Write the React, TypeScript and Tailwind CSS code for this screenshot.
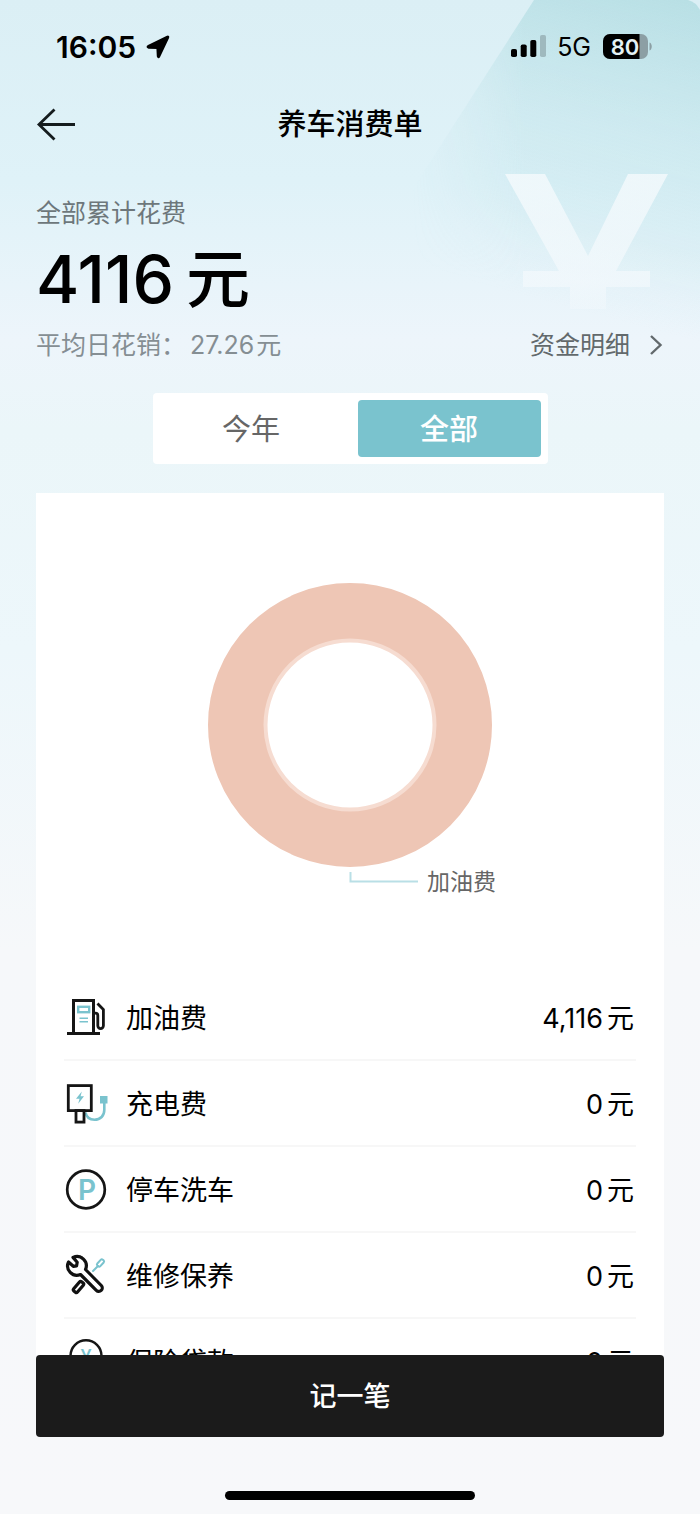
import { useState } from 'react'
import type { ReactNode } from 'react'

type Expense = {
  name: string
  amount: string
  icon: ReactNode
}

function FuelIcon() {
  return (
    <svg viewBox="0 0 44 44" className="size-11" fill="none" stroke="#151515" strokeWidth="3" aria-hidden="true">
      <path d="M3 38.5H36" />
      <rect x="9.5" y="5.5" width="20" height="33" />
      <path d="M30 18.2h1.5a2.3 2.3 0 0 1 2.3 2.3v10.3a2.8 2.8 0 0 0 5.6 0V14.5L33.5 8.5" strokeWidth="2.8" />
      <rect x="14.2" y="11.8" width="11" height="5.4" stroke="#7ac3ce" strokeWidth="2.4" />
      <path d="M15.5 23.2h8.5M15.5 26.8h8.5" stroke="#7ac3ce" strokeWidth="1.6" />
    </svg>
  )
}

function ChargeIcon() {
  return (
    <svg viewBox="0 0 44 44" className="size-11" fill="none" stroke="#151515" strokeWidth="2.8" aria-hidden="true">
      <path d="M21.5 31.5c1 5 4.8 7.2 9 7.2c6 0 9.8-4 9.8-9.7v-8" stroke="#7ac3ce" strokeWidth="2.6" />
      <rect x="36" y="15" width="7.5" height="7.5" fill="#7ac3ce" stroke="none" />
      <rect x="4.3" y="4.6" width="23" height="25" />
      <rect x="12" y="29.6" width="8" height="11.5" />
      <path d="M17.8 10.5L12 17.8H15.5L14.2 22.7L20 15.3H16.6Z" fill="#7ac3ce" stroke="none" />
    </svg>
  )
}

function ParkingIcon() {
  return (
    <svg viewBox="0 0 44 44" className="size-11" aria-hidden="true">
      <circle cx="22" cy="22.5" r="18.8" fill="none" stroke="#151515" strokeWidth="2.7" />
      <text x="23" y="33" textAnchor="middle" fontSize="28" fontWeight="600" fill="#7ac3ce">P</text>
    </svg>
  )
}

function RepairIcon() {
  return (
    <svg viewBox="0 0 44 44" className="size-11" fill="none" stroke="#111" strokeWidth="3.2" strokeLinejoin="round" strokeLinecap="round" aria-hidden="true">
      <path d="M9 4.4L13.2 9.3L12.6 12.8L9.3 13.3L4.5 9A9.3 9.3 0 0 0 16.5 21.5L32.3 37.3A3.1 3.1 0 0 0 37.3 32.5L21.5 16.5A9.3 9.3 0 0 0 9 4.4Z" />
      <rect x="8.5" y="31.5" width="12" height="5" rx="1.5" transform="rotate(-50 14.5 34)" />
      <g stroke="#7ac3ce" strokeWidth="2">
        <rect x="32.5" y="8" width="8" height="4" rx="1.5" transform="rotate(-48 36.5 10)" />
        <path d="M34 13L29 18" />
      </g>
    </svg>
  )
}

function InsuranceIcon() {
  return (
    <svg viewBox="0 0 44 44" className="size-11" aria-hidden="true">
      <path d="M6.5 16.8a15.5 15.5 0 0 1 31 0v9c0 7-7 12-15.5 15.5c-8.5-3.5-15.500-8.500-15.500-15.500z" fill="none" stroke="#151515" strokeWidth="2.5" />
      <text x="22" y="25" textAnchor="middle" fontSize="20" fontWeight="500" fill="#7ac3ce">¥</text>
    </svg>
  )
}

const expenses: Expense[] = [
  { name: '加油费', amount: '4,116', icon: <FuelIcon /> },
  { name: '充电费', amount: '0', icon: <ChargeIcon /> },
  { name: '停车洗车', amount: '0', icon: <ParkingIcon /> },
  { name: '维修保养', amount: '0', icon: <RepairIcon /> },
  { name: '保险贷款', amount: '0', icon: <InsuranceIcon /> },
]

const tabs = ['今年', '全部']

function StatusBar() {
  return (
    <div className="flex h-[94px] items-center justify-between pr-[47px] pl-14 text-black">
      <div className="flex items-center gap-[10px]">
        <span className="text-[30px] leading-none font-semibold">16:05</span>
        <svg viewBox="0 0 24 24" className="size-6" fill="currentColor" stroke="currentColor" strokeWidth="2.4" strokeLinejoin="round" aria-hidden="true">
          <path d="M1.8 11.8Q1.8 11.3 2.5 11L21.5 1.8Q22.3 1.6 22 2.4L13 21.5Q12.3 22.5 12 21.3L11.6 13.2Q11.5 12.7 11 12.7L2.5 12.5Z" />
        </svg>
      </div>
      <div className="flex items-center gap-[10px]">
        <svg viewBox="0 0 36 24" className="h-6 w-9" aria-hidden="true">
          <rect x="0" y="14" width="6" height="8" rx="1.8" />
          <rect x="9.7" y="9.5" width="6" height="12.5" rx="1.8" />
          <rect x="19.3" y="5" width="6" height="17" rx="1.8" />
          <rect x="29" y="0" width="6" height="22" rx="1.8" fill="#9fb9be" />
        </svg>
        <span className="mr-0.5 text-[25px] leading-none">5G</span>
        <svg viewBox="0 0 50 26" className="h-[26px] w-[50px]" role="img" aria-label="电量 80%">
          <clipPath id="battery">
            <rect x="0" y="0" width="45" height="25" rx="7" />
          </clipPath>
          <g clipPath="url(#battery)">
            <rect width="45" height="25" fill="#8c9fa4" />
            <rect width="36.5" height="25" fill="#000" />
          </g>
          <path d="M46.5 8.5c3 1 3 7 0 8z" fill="#8c9fa4" />
          <text x="22" y="20.5" textAnchor="middle" fontSize="22" fontWeight="600" fill="#e4f2f4">80</text>
        </svg>
      </div>
    </div>
  )
}

// Tinted panel and currency mark behind the summary
function Backdrop() {
  return (
    <svg viewBox="0 0 320 400" className="pointer-events-none absolute top-0 right-0 h-[400px] w-80" aria-hidden="true">
      <defs>
        <linearGradient id="panel" gradientUnits="userSpaceOnUse" x1="320" y1="0" x2="235" y2="320">
          <stop offset="0" stopColor="#8fcdd2" stopOpacity="0.46" />
          <stop offset="0.45" stopColor="#a0d6dc" stopOpacity="0.24" />
          <stop offset="0.75" stopColor="#a5d9df" stopOpacity="0.14" />
          <stop offset="1" stopColor="#c5e8ec" stopOpacity="0" />
        </linearGradient>
        <linearGradient id="edge" x1="0" y1="0" x2="1" y2="0">
          <stop offset="0.1" stopColor="#000" />
          <stop offset="0.45" stopColor="#fff" />
        </linearGradient>
        <mask id="panelFade">
          <rect width="320" height="400" fill="url(#edge)" />
        </mask>
        <linearGradient id="mark" x1="0" y1="0" x2="0" y2="1">
          <stop offset="0" stopColor="#fafcfe" stopOpacity="0.7" />
          <stop offset="0.8" stopColor="#f6fafd" stopOpacity="0.6" />
          <stop offset="1" stopColor="#f6fafd" stopOpacity="0.3" />
        </linearGradient>
      </defs>
      <path d="M154 0H308Q316 2 320 10V400H0V240Z" fill="url(#panel)" mask="url(#panelFade)" />
      <path d="M125 174H165L208 256L248 174H288L236 271H270V287H226V309H190V287H143V271H179Z" fill="url(#mark)" />
    </svg>
  )
}

function CostChart() {
  return (
    <svg viewBox="0 0 420 320" className="mx-auto mt-[90px] w-[420px] max-w-full" role="img" aria-label="加油费占比 100%">
      <circle cx="210" cy="142" r="113.5" fill="none" stroke="#eec6b5" strokeWidth="57" />
      <circle cx="210" cy="142" r="84.5" fill="none" stroke="#f6dcd1" strokeWidth="4" />
      <path d="M210.5 289V298.5H278" fill="none" stroke="#b9dfe6" strokeWidth="2" />
      <text x="287" y="307" fontSize="23" fill="#666">加油费</text>
    </svg>
  )
}

export default function App() {
  const [activeTab, setActiveTab] = useState('全部')

  return (
    <div className="relative flex h-screen flex-col overflow-hidden bg-[linear-gradient(180deg,#dbeff5_0px,#dff2f8_180px,#edf5fb_340px,#ebf6f9_430px,#edf7fb_650px,#f6f8fa_950px,#f7f8fa_100%)] font-[Inter,'Noto_Sans_CJK_SC',sans-serif] text-[#111]">
      <Backdrop />

      <div className="relative flex min-h-0 flex-1 flex-col">
        <StatusBar />

        <header className="grid h-[60px] grid-cols-[1fr_auto_1fr] items-center px-9">
          <button type="button" aria-label="返回" className="w-10">
            <svg viewBox="0 0 40 34" className="h-[34px] w-10" fill="none" stroke="#151c1e" strokeWidth="2.8" aria-hidden="true">
              <path d="M39 17.5H3M18.5 2.5L3 17.5L18.5 32.5" />
            </svg>
          </button>
          <h1 className="pt-0.5 text-[29px] leading-10 font-medium text-black">养车消费单</h1>
        </header>

        {/* Summary */}
        <section className="px-9 pt-[41px]">
          <p className="text-[25px] leading-9 text-[#6d777b]">全部累计花费</p>
          <p className="mt-2 flex items-center text-[66px] leading-[80px] font-medium text-black">
            4116
            <span className="ml-3 text-[64px]">元</span>
          </p>
          <div className="mt-2 flex items-center justify-between text-[25px] leading-9">
            <p className="text-[#858e93]">
              平均日花销：<span className="mr-0.5 ml-1">27.26</span>元
            </p>
            <a href="#details" className="flex items-center gap-[18px] text-[#62696c]">
              资金明细
              <svg viewBox="0 0 16 22" className="h-[22px] w-4" fill="none" stroke="currentColor" strokeWidth="2.4" aria-hidden="true">
                <path d="M3 2L12.5 11L3 20" />
              </svg>
            </a>
          </div>
        </section>

        {/* Period */}
        <div className="mx-auto mt-[30px] grid w-[395px] grid-cols-2 gap-[15px] rounded-sm bg-white p-[7px]">
          {tabs.map((tab) => (
            <button
              key={tab}
              type="button"
              aria-pressed={activeTab === tab}
              onClick={() => setActiveTab(tab)}
              className={
                activeTab === tab
                  ? 'h-[57px] rounded-sm bg-[#7ac3ce] pt-0.5 text-[29px] font-medium text-white'
                  : 'h-[57px] rounded-sm pt-0.5 text-[29px] text-[#666]'
              }
            >
              {tab}
            </button>
          ))}
        </div>

        {/* Breakdown */}
        <main className="mx-9 mt-[29px] min-h-0 flex-1 overflow-y-auto bg-white [scrollbar-width:none]">
          <CostChart />
          <ul className="mt-[72px] px-7">
            {expenses.map((expense) => (
              <li
                key={expense.name}
                className="flex h-[86px] items-center gap-[18px] border-b-2 border-[#f7f7f7] pr-0.5 text-[27px] text-black"
              >
                {expense.icon}
                <span className="pt-[5px]">{expense.name}</span>
                <span className="ml-auto pt-[5px]">
                  {expense.amount}
                  <span className="ml-1">元</span>
                </span>
              </li>
            ))}
          </ul>
        </main>
      </div>

      <footer className="relative px-9 pb-[14px]">
        <button type="button" className="h-[82px] w-full rounded bg-[#1b1b1b] pt-0.5 text-[27px] font-medium text-white">
          记一笔
        </button>
        <div className="mx-auto mt-[54px] h-[9px] w-[250px] rounded-full bg-black" />
      </footer>
    </div>
  )
}
